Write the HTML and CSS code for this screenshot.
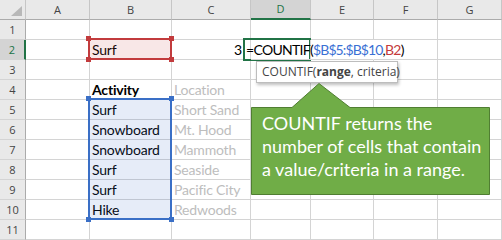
FILE: index.html
```html
<!DOCTYPE html>
<html>
<head>
<meta charset="utf-8">
<link rel="stylesheet" href="styles.css">
</head>
<body>
<div class="sheet">
  <div class="grid">
    <div class="hd corner"><svg class="tri" width="26" height="20" viewBox="0 0 26 20"><polygon points="22,6 22,16 11,16" fill="#b8b8b8"/></svg></div>
    <div class="hd col">A</div>
    <div class="hd col">B</div>
    <div class="hd col">C</div>
    <div class="hd col sel-col">D</div>
    <div class="hd col">E</div>
    <div class="hd col">F</div>
    <div class="hd col">G</div>

    <div class="hd row">1</div><div class="c"></div><div class="c"></div><div class="c"></div><div class="c"></div><div class="c"></div><div class="c"></div><div class="c"></div>

    <div class="hd row sel-row">2</div><div class="c"></div><div class="c">Surf</div><div class="c num">3</div><div class="c formula">=COUNTIF(<span class="ref-blue">$B$5:$B$10</span>,<span class="ref-red">B2</span>)</div><div class="c no-r"></div><div class="c"></div><div class="c"></div>

    <div class="hd row">3</div><div class="c"></div><div class="c"></div><div class="c"></div><div class="c"></div><div class="c"></div><div class="c"></div><div class="c"></div>

    <div class="hd row">4</div><div class="c"></div><div class="c bold">Activity</div><div class="c muted">Location</div><div class="c"></div><div class="c"></div><div class="c"></div><div class="c"></div>

    <div class="hd row">5</div><div class="c"></div><div class="c">Surf</div><div class="c muted">Short Sand</div><div class="c"></div><div class="c"></div><div class="c"></div><div class="c"></div>

    <div class="hd row">6</div><div class="c"></div><div class="c">Snowboard</div><div class="c muted">Mt. Hood</div><div class="c"></div><div class="c"></div><div class="c"></div><div class="c"></div>

    <div class="hd row">7</div><div class="c"></div><div class="c">Snowboard</div><div class="c muted">Mammoth</div><div class="c"></div><div class="c"></div><div class="c"></div><div class="c"></div>

    <div class="hd row">8</div><div class="c"></div><div class="c">Surf</div><div class="c muted">Seaside</div><div class="c"></div><div class="c"></div><div class="c"></div><div class="c"></div>

    <div class="hd row">9</div><div class="c"></div><div class="c">Surf</div><div class="c muted">Pacific City</div><div class="c"></div><div class="c"></div><div class="c"></div><div class="c"></div>

    <div class="hd row">10</div><div class="c"></div><div class="c">Hike</div><div class="c muted">Redwoods</div><div class="c"></div><div class="c"></div><div class="c"></div><div class="c"></div>

    <div class="hd row">11</div><div class="c"></div><div class="c"></div><div class="c"></div><div class="c"></div><div class="c"></div><div class="c"></div><div class="c"></div>
  </div>

  <div class="range range-red">
    <i class="h tl"></i><i class="h tr"></i><i class="h bl"></i><i class="h br"></i>
  </div>
  <div class="range range-blue">
    <i class="h tl"></i><i class="h tr"></i><i class="h bl"></i><i class="h br"></i>
  </div>
  <div class="active"></div>

  <div class="tip">COUNTIF(<b>range</b>, criteria)</div>

  <svg class="callout-shape" width="245" height="118" viewBox="0 0 245 118">
    <path d="M2.5,26.5 H43 L70,2.5 L101,26.5 H240.5 V113.5 H2.5 Z" fill="#70ad47" stroke="#507e32" stroke-width="1"/>
  </svg>
  <div class="callout-text">COUNTIF returns the<br>number of cells that contain<br>a value/criteria in a range.</div>
</div>
</body>
</html>
```

FILE: styles.css
```css
html, body {
  margin: 0;
  padding: 0;
  background: #ffffff;
}

.sheet {
  position: relative;
  width: 502px;
  height: 240px;
  overflow: hidden;
  font-family: Lato, "Liberation Sans", sans-serif;
}

.grid {
  display: grid;
  grid-template-columns: 26px 64px 82px 79px 60px 63px 64px 64px;
  grid-auto-rows: 20px;
}

.c {
  box-sizing: border-box;
  border-right: 1px solid #d4d4d4;
  border-bottom: 1px solid #d4d4d4;
  font-size: 14px;
  letter-spacing: -0.2px;
  line-height: 19px;
  color: #000;
  padding: 0 2px;
  white-space: nowrap;
  overflow: visible;
}

.c.num { text-align: right; padding-right: 8px; }
.c.bold { font-weight: bold; }
.c.muted { color: #bdbdbd; }
.c.no-r { border-right-color: transparent; }

.formula {
  padding-left: 0;
  text-indent: -5px;
  letter-spacing: -0.7px;
  position: relative;
  z-index: 2;
}
.ref-blue { color: #3a70d4; letter-spacing: -0.9px; }
.ref-red { color: #c43a3c; }

.hd {
  box-sizing: border-box;
  background: #e9e9e9;
  color: #444;
  font-family: "Open Sans", "Noto Sans", sans-serif;
  font-size: 11px;
  line-height: 19px;
  text-align: center;
  border-right: 1px solid #c6c6c6;
  border-bottom: 1px solid #d4d4d4;
}
.hd.col, .hd.corner { border-bottom: 1px solid #ababab; }
.hd.row { border-right: 1px solid #ababab; }
.corner { position: relative; }
.tri { display: block; }

.sel-col {
  background: #d4d4d4;
  color: #217346;
  border-bottom: 2px solid #217346 !important;
  line-height: 18px;
}
.sel-row {
  background: #d4d4d4;
  color: #217346;
  border-right: 2px solid #217346 !important;
}

.range {
  position: absolute;
  box-sizing: border-box;
  border: 2px solid;
}
.range-red {
  left: 88px; top: 38px; width: 84px; height: 22px;
  border-color: #c23b3d;
  background: rgba(196, 58, 60, 0.12);
}
.range-blue {
  left: 88px; top: 98px; width: 84px; height: 122px;
  border-color: #3a6fc6;
  background: rgba(58, 111, 198, 0.13);
}
.h {
  position: absolute;
  width: 5px;
  height: 5px;
}
.range-red .h { background: #c23b3d; }
.range-blue .h { background: #3a6fc6; }
.h.tl { left: -4px; top: -4px; }
.h.tr { right: -4px; top: -4px; }
.h.bl { left: -4px; bottom: -4px; }
.h.br { right: -4px; bottom: -4px; }

.active {
  position: absolute;
  left: 243px; top: 38px; width: 68px; height: 23px;
  box-sizing: border-box;
  border: 2px solid #217346;
}

.tip {
  position: absolute;
  left: 256px; top: 61px; width: 142px; height: 22px;
  box-sizing: border-box;
  background: #fff;
  border: 1px solid #bdbdbd;
  box-shadow: 1px 2px 3px rgba(0,0,0,0.25);
  font-family: "Open Sans", "Noto Sans", sans-serif;
  font-size: 12px;
  line-height: 20px;
  color: #444;
  padding-left: 5px;
  white-space: nowrap;
  z-index: 3;
}
.tip b { font-weight: bold; }

.callout-shape {
  position: absolute;
  left: 249px;
  top: 81px;
  z-index: 4;
}
.callout-text {
  position: absolute;
  left: 251px;
  top: 107px;
  width: 239px;
  box-sizing: border-box;
  padding: 5px 0 0 11px;
  color: #fff;
  font-size: 18px;
  line-height: 23px;
  white-space: nowrap;
  z-index: 5;
}
```
